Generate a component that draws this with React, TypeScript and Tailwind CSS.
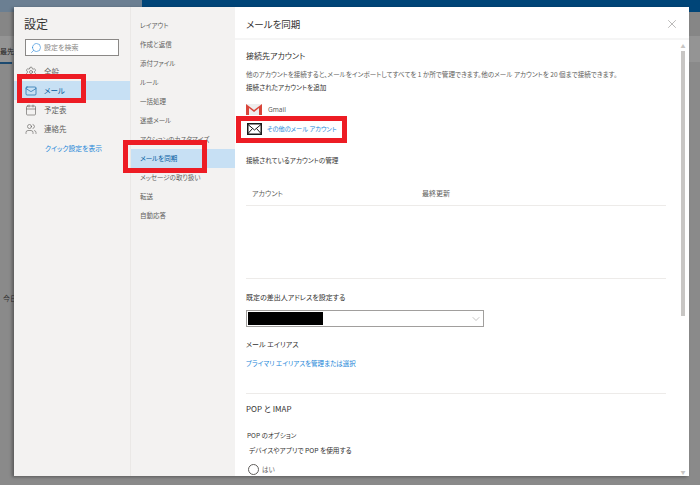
import React from 'react';
import { Search, Settings, Mail, Calendar, Users, X, ChevronDown } from 'lucide-react';

const jp = { fontFamily: '"Noto Sans CJK JP", "Noto Sans", sans-serif' };

const mainNav = [
  { label: '全般', Icon: Settings },
  { label: 'メール', Icon: Mail, active: true },
  { label: '予定表', Icon: Calendar },
  { label: '連絡先', Icon: Users },
];

const subNav = ['レイアウト', '作成と返信', '添付ファイル', 'ルール', '一括処理', '迷惑メール', 'アクションのカスタマイズ', 'メールを同期', 'メッセージの取り扱い', '転送', '自動応答'];

const RedBox = ({ className }: { className: string }) => (
  <div className={`absolute border-[5px] border-[#ed1c24] ${className}`} />
);

export default function App() {
  return (
    <div className="relative w-[700px] h-[485px] overflow-hidden bg-[#8a8a8a] [font-feature-settings:'palt']" style={jp}>
      {/* dimmed mail app behind the dialog */}
      <div className="flex h-[12px]">
        <div className="w-[142px] bg-[#6b7f92]" />
        <div className="flex-1 bg-[#004578]" />
      </div>
      <div className="h-[24px] bg-[#868686]" />
      <div className="h-[26px] bg-[#949494] pt-[10px] text-[7px] leading-[10px] text-[#222]">最先</div>
      <div className="w-[12px] h-[2px] bg-[#1c4a70]" />
      <div className="mt-[229px] pl-[3px] text-[7px] leading-[10px] text-[#333]">今日</div>

      {/* settings dialog */}
      <div className="absolute left-[14px] top-[7px] w-[675px] h-[469px] flex bg-white shadow-[-2px_1px_3px_rgba(0,0,0,0.35)]">
        <div className="w-[116px] bg-[#f3f2f1] flex flex-col">
          <div className="pl-[10px] pt-[8px] text-[12px] leading-[18px] text-[#323130]">設定</div>
          <div className="ml-[11px] mt-[6px] w-[94px] h-[17px] bg-white border border-[#8a8886] flex items-center pl-[4px] gap-[2px]">
            <Search className="w-[12px] h-[12px] text-[#2b88d8] -scale-x-100" strokeWidth={1.25} />
            <span className="text-[7px] text-[#8a8886]">設定を検索</span>
          </div>
          <div className="mt-[6px] flex flex-col">
            {mainNav.map(({ label, Icon, active }) => (
              <div key={label} className={`h-[19px] flex items-center pl-[11px] gap-[7px] ${active ? 'bg-[#c7e0f4] text-[#005a9e]' : 'text-[#605e5c]'}`}>
                <Icon className="w-[12px] h-[12px]" strokeWidth={1.25} />
                <span className="text-[7.5px] leading-none">{label}</span>
              </div>
            ))}
          </div>
          <div className="pl-[31px] mt-[4px] text-[6.8px] leading-[12px] text-[#1a86d8]">クイック設定を表示</div>
        </div>

        <div className="w-[105px] bg-[#f3f2f1] border-l border-[#eae8e6] pt-[9px] flex flex-col">
          {subNav.map((label) => {
            const active = label === 'メールを同期';
            return (
              <div key={label} className={`h-[19px] shrink-0 flex items-center pl-[9px] text-[6.5px] leading-none ${active ? 'bg-[#c7e0f4] text-[#005a9e]' : 'text-[#605e5c]'}`}>
                {label}
              </div>
            );
          })}
        </div>

        <div className="flex-1 flex flex-col min-w-0">
          <div className="h-[33px] shrink-0 flex items-center justify-between pl-[11px] pr-[10px] pt-[3px] border-b-[2px] border-[#f5f5f5]">
            <span className="text-[9.5px] text-[#323130]">メールを同期</span>
            <X className="w-[14px] h-[14px] text-[#8a8886]" strokeWidth={1} />
          </div>
          <div className="flex-1 flex min-h-0">
            <div className="flex-1 min-w-0 pl-[11px] pr-[13px] overflow-hidden">
              <div className="pt-[10px] text-[8px] leading-[12px] text-[#323130]">接続先アカウント</div>
              <p className="mt-[7px] whitespace-nowrap text-[6.55px] leading-[10px] text-[#605e5c]">他のアカウントを接続すると、メールをインポートしてすべてを 1 か所で管理できます。他のメール アカウントを 20 個まで接続できます。</p>
              <div className="mt-[3px] text-[6.6px] leading-[10px] text-[#323130]">接続されたアカウントを追加</div>
              <div className="mt-[9px] h-[16px] flex items-center gap-[6px]">
                <svg viewBox="0 0 16 12" className="w-[16px] h-[12px]">
                  <path d="M0 1h16v11H0z" fill="#eee" />
                  <path d="M0 1l8 6 8-6v11h-3V5L8 9 3 5v7H0z" fill="#d9453a" />
                </svg>
                <span className="pt-[2px] text-[6.5px] text-[#605e5c]" style={{ fontFamily: '"Noto Sans", sans-serif' }}>Gmail</span>
              </div>
              <div className="mt-[3px] h-[18px] flex items-center gap-[5px] pl-[1px]">
                <svg viewBox="0 0 15 12" className="w-[15px] h-[12px]">
                  <rect x="0.75" y="0.75" width="13.5" height="10.5" fill="#fff" stroke="#1a1a1a" strokeWidth="1.5" />
                  <path d="M1 1.5l6.5 5.5 6.5-5.5M1 10.5l4.5-5M14 10.5l-4.5-5" fill="none" stroke="#1a1a1a" strokeWidth="1" />
                </svg>
                <span className="text-[6.2px] leading-none text-[#1a86d8]">その他のメール アカウント</span>
              </div>
              <div className="mt-[17px] text-[6.6px] leading-[10px] text-[#323130]">接続されているアカウントの管理</div>
              <div className="mt-[16px] h-[25px] flex items-center pl-[6px] border-b border-[#edebe9] text-[7px] text-[#605e5c]">
                <span className="w-[170px]">アカウント</span>
                <span>最終更新</span>
              </div>
              <div className="mt-[72px] border-t border-[#edebe9] pt-[13px] text-[7px] leading-[10px] text-[#323130]">既定の差出人アドレスを設定する</div>
              <div className="mt-[8px] w-[238px] h-[17px] border border-[#a19f9d] flex items-center justify-between pl-[1px] pr-[1px]">
                <div className="w-[75px] h-[13px] bg-black" />
                <ChevronDown className="w-[12px] h-[12px] text-[#8a8886]" strokeWidth={1} />
              </div>
              <div className="mt-[12px] text-[7px] leading-[10px] text-[#323130]">メール エイリアス</div>
              <div className="mt-[9px] text-[6.5px] leading-[10px] text-[#1a86d8]">プライマリ エイリアスを管理または選択</div>
              <div className="mt-[25px] border-t border-[#edebe9] pt-[8px] text-[8px] leading-[14px] text-[#323130]">POP と IMAP</div>
              <div className="mt-[14px] pl-[1px] text-[6.5px] leading-[10px] text-[#323130]">POP のオプション</div>
              <div className="mt-[5px] pl-[3px] text-[6.7px] leading-[10px] text-[#323130]">デバイスやアプリで POP を使用する</div>
              <div className="mt-[9px] pl-[2px] flex items-center gap-[3px]">
                <div className="w-[11px] h-[11px] rounded-full border border-[#605e5c]" />
                <span className="text-[6.5px] text-[#605e5c]">はい</span>
              </div>
            </div>
            {/* scrollbar */}
            <div className="w-[10px] shrink-0 flex flex-col items-center pr-[2px]">
              <div className="mt-[3px] text-[5px] leading-[6px] text-[#c8c6c4]">▲</div>
              <div className="mt-[2px] w-[4px] h-[265px] bg-[#c8c6c4]" />
              <div className="mt-auto mb-[1px] text-[5px] leading-[6px] text-[#c8c6c4]">▼</div>
            </div>
          </div>
        </div>
      </div>

      <RedBox className="left-[17px] top-[74px] w-[69px] h-[29px]" />
      <RedBox className="left-[123px] top-[140px] w-[84px] h-[33px]" />
      <RedBox className="left-[236px] top-[116px] w-[111px] h-[27px]" />
    </div>
  );
}
